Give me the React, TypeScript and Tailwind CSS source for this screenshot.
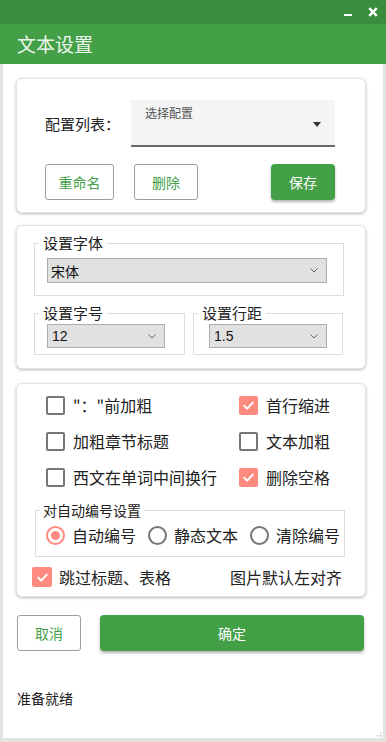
import React from "react";

function Check({ checked, size = 19 }: { checked?: boolean; size?: number }) {
  return checked ? (
    <span
      className="flex shrink-0 items-center justify-center rounded-[2px] bg-[#ff8a80]"
      style={{ width: size, height: size }}
    >
      <svg width="11" height="9" viewBox="0 0 11 9" fill="none">
        <path d="M1.2 4.6l3 3 5.6-6" stroke="white" strokeWidth="2" strokeLinecap="round" strokeLinejoin="round" />
      </svg>
    </span>
  ) : (
    <span
      className="shrink-0 rounded-[2px] border-2 border-[#777777] bg-white"
      style={{ width: size, height: size }}
    />
  );
}

function Radio({ on }: { on?: boolean }) {
  return (
    <svg width="19" height="19" viewBox="0 0 19 19" className="shrink-0">
      <circle cx="9.5" cy="9.5" r="8.5" fill="white" stroke={on ? "#ff8a80" : "#777777"} strokeWidth="2" />
      {on && <circle cx="9.5" cy="9.5" r="4.5" fill="#ff8a80" />}
    </svg>
  );
}

function Chevron() {
  return (
    <svg width="8" height="5" viewBox="0 0 8 5" fill="none" className="ml-auto">
      <path d="M0.5 0.5L4 4l3.5-3.5" stroke="#606060" strokeWidth="1" />
    </svg>
  );
}

// WinForms 风格的下拉框
function Combo({ value, className, textClass }: { value: string; className: string; textClass: string }) {
  return (
    <div className={"flex items-center border border-[#adadad] bg-[#e1e1e1] pr-[8px] " + className}>
      <span className={"text-[#111] " + textClass}>{value}</span>
      <Chevron />
    </div>
  );
}

const checkRows = [
  { left: "\"：\"前加粗", leftOn: false, right: "首行缩进", rightOn: true },
  { left: "加粗章节标题", leftOn: false, right: "文本加粗", rightOn: false },
  { left: "西文在单词中间换行", leftOn: false, right: "删除空格", rightOn: true },
];

const radios = [
  { label: "自动编号", on: true },
  { label: "静态文本", on: false },
  { label: "清除编号", on: false },
];

const card =
  "ml-[13px] w-[350px] rounded-[6px] border border-[#e4e4e4] bg-white shadow-[0_1px_3px_rgba(0,0,0,0.28)]";

export default function App() {
  return (
    <div className="flex h-[742px] w-[386px] flex-col overflow-hidden bg-white font-['Noto_Sans_CJK_SC','Noto_Sans',sans-serif] text-[#222]">
      {/* 顶部窗口条 */}
      <div className="flex h-[24px] items-center justify-end bg-[#388e3c] pr-[8px]">
        <span className="mt-[6px] h-[2.5px] w-[8px] bg-white" />
        <svg width="10" height="10" viewBox="0 0 10 10" className="ml-[16px]">
          <path d="M1.2 1.2l7.6 7.6M8.8 1.2L1.2 8.8" stroke="white" strokeWidth="2.4" />
        </svg>
      </div>
      <div className="h-[40px] bg-[#43a047] pl-[17px] text-[19px] leading-[40px] text-[#eef7ee]">文本设置</div>

      <div className="relative flex-1 border-x-[3px] border-b-[4px] border-[#e2e2e2]">
        {/* 配置列表 */}
        <div className={card + " mt-[14px] pb-[12px] pl-[28px] pt-[21px]"}>
          <div className="flex items-center">
            <span className="w-[86px] text-[15px] leading-[20px]">配置列表：</span>
            <div className="flex h-[47px] w-[204px] items-start border-b-2 border-[#6b6b6b] bg-[#f4f4f4] pl-[14px] pr-[14px] pt-[5px]">
              <span className="text-[12px] leading-[16px] text-[#555]">选择配置</span>
              <svg width="8" height="5" viewBox="0 0 8 5" className="ml-auto mt-[17px]">
                <path d="M0 0h8L4 5z" fill="#333" />
              </svg>
            </div>
          </div>
          <div className="mt-[17px] flex w-[290px]">
            <button className="h-[36px] w-[69px] rounded-[3px] border border-[#9e9e9e] bg-white text-[14px] text-[#43a047]">
              重命名
            </button>
            <button className="ml-[20px] h-[36px] w-[64px] rounded-[3px] border border-[#9e9e9e] bg-white text-[14px] text-[#43a047]">
              删除
            </button>
            <button className="ml-auto h-[36px] w-[64px] rounded-[4px] bg-[#43a047] text-[14px] text-white shadow-[0_2px_3px_rgba(0,0,0,0.3)]">
              保存
            </button>
          </div>
        </div>

        {/* 字体设置 */}
        <div className={card + " mt-[12px] pb-[13px] pt-[7px]"}>
          <fieldset className="ml-[17px] w-[310px] min-w-0 border border-[#dcdcdc] pb-[12px]">
            <legend className="ml-[4px] px-[4px] text-[15px] leading-[20px]">设置字体</legend>
            <Combo value="宋体" className="ml-[12px] mt-[5px] h-[25px] w-[280px] pl-[3px]" textClass="text-[14px] leading-[20px]" />
          </fieldset>
          <div className="mt-[7px] flex">
            <fieldset className="ml-[17px] w-[151px] min-w-0 border border-[#dcdcdc] pb-[6px]">
              <legend className="ml-[4px] px-[4px] text-[15px] leading-[20px]">设置字号</legend>
              <Combo value="12" className="ml-[12px] mt-[1px] h-[24px] w-[118px] pl-[4px]" textClass="font-['Liberation_Sans',sans-serif] text-[14px] leading-[18px]" />
            </fieldset>
            <fieldset className="ml-[8px] w-[150px] min-w-0 border border-[#dcdcdc] pb-[6px]">
              <legend className="ml-[4px] px-[4px] text-[15px] leading-[20px]">设置行距</legend>
              <Combo value="1.5" className="ml-[15px] mt-[1px] h-[24px] w-[118px] pl-[4px]" textClass="font-['Liberation_Sans',sans-serif] text-[14px] leading-[18px]" />
            </fieldset>
          </div>
        </div>

        {/* 选项 */}
        <div className={card + " mt-[14px] pb-[5px] pt-[3px]"}>
          <div className="grid grid-cols-[193px_1fr] pl-[29px]">
            {checkRows.map((r) => (
              <React.Fragment key={r.left}>
                <div className="flex h-[36px] items-center gap-[8px]">
                  <Check checked={r.leftOn} />
                  <span className="whitespace-nowrap text-[16px] leading-[20px]">{r.left}</span>
                </div>
                <div className="flex h-[36px] items-center gap-[8px]">
                  <Check checked={r.rightOn} />
                  <span className="whitespace-nowrap text-[16px] leading-[20px]">{r.right}</span>
                </div>
              </React.Fragment>
            ))}
          </div>

          <fieldset className="ml-[18px] mt-[5px] w-[310px] min-w-0 border border-[#dcdcdc] pb-[6px]">
            <legend className="ml-[4px] px-[3px] text-[14px] leading-[20px]">对自动编号设置</legend>
            <div className="flex h-[30px] items-center pl-[10px]">
              {radios.map((r, i) => (
                <div
                  key={r.label}
                  className={"flex shrink-0 items-center gap-[7px] " + (i < 2 ? "w-[102px]" : "")}
                >
                  <Radio on={r.on} />
                  <span className="whitespace-nowrap text-[16px] leading-[20px]">{r.label}</span>
                </div>
              ))}
            </div>
          </fieldset>

          <div className="mt-[6px] flex h-[28px] items-center pl-[15px] pr-[23px]">
            <Check checked size={20} />
            <span className="ml-[7px] text-[16px] leading-[20px]">跳过标题、表格</span>
            <span className="ml-auto text-[16px] leading-[20px]">图片默认左对齐</span>
          </div>
        </div>

        <div className="ml-[14px] mt-[18px] flex">
          <button className="h-[36px] w-[64px] rounded-[3px] border border-[#9e9e9e] bg-white text-[14px] text-[#43a047]">
            取消
          </button>
          <button className="ml-[19px] h-[36px] w-[264px] rounded-[4px] bg-[#43a047] text-[14px] text-white shadow-[0_2px_3px_rgba(0,0,0,0.3)]">
            确定
          </button>
        </div>

        <div className="ml-[14px] mt-[37px] text-[14px] leading-[20px]">准备就绪</div>

        {/* 右下角尺寸把手 */}
        <svg width="5" height="5" viewBox="0 0 5 5" className="absolute bottom-[1px] right-[1px]">
          <rect x="3" y="0" width="1.5" height="1.5" fill="#c4c4c4" />
          <rect x="0" y="3" width="1.5" height="1.5" fill="#c4c4c4" />
          <rect x="3" y="3" width="1.5" height="1.5" fill="#c4c4c4" />
        </svg>
      </div>
    </div>
  );
}
